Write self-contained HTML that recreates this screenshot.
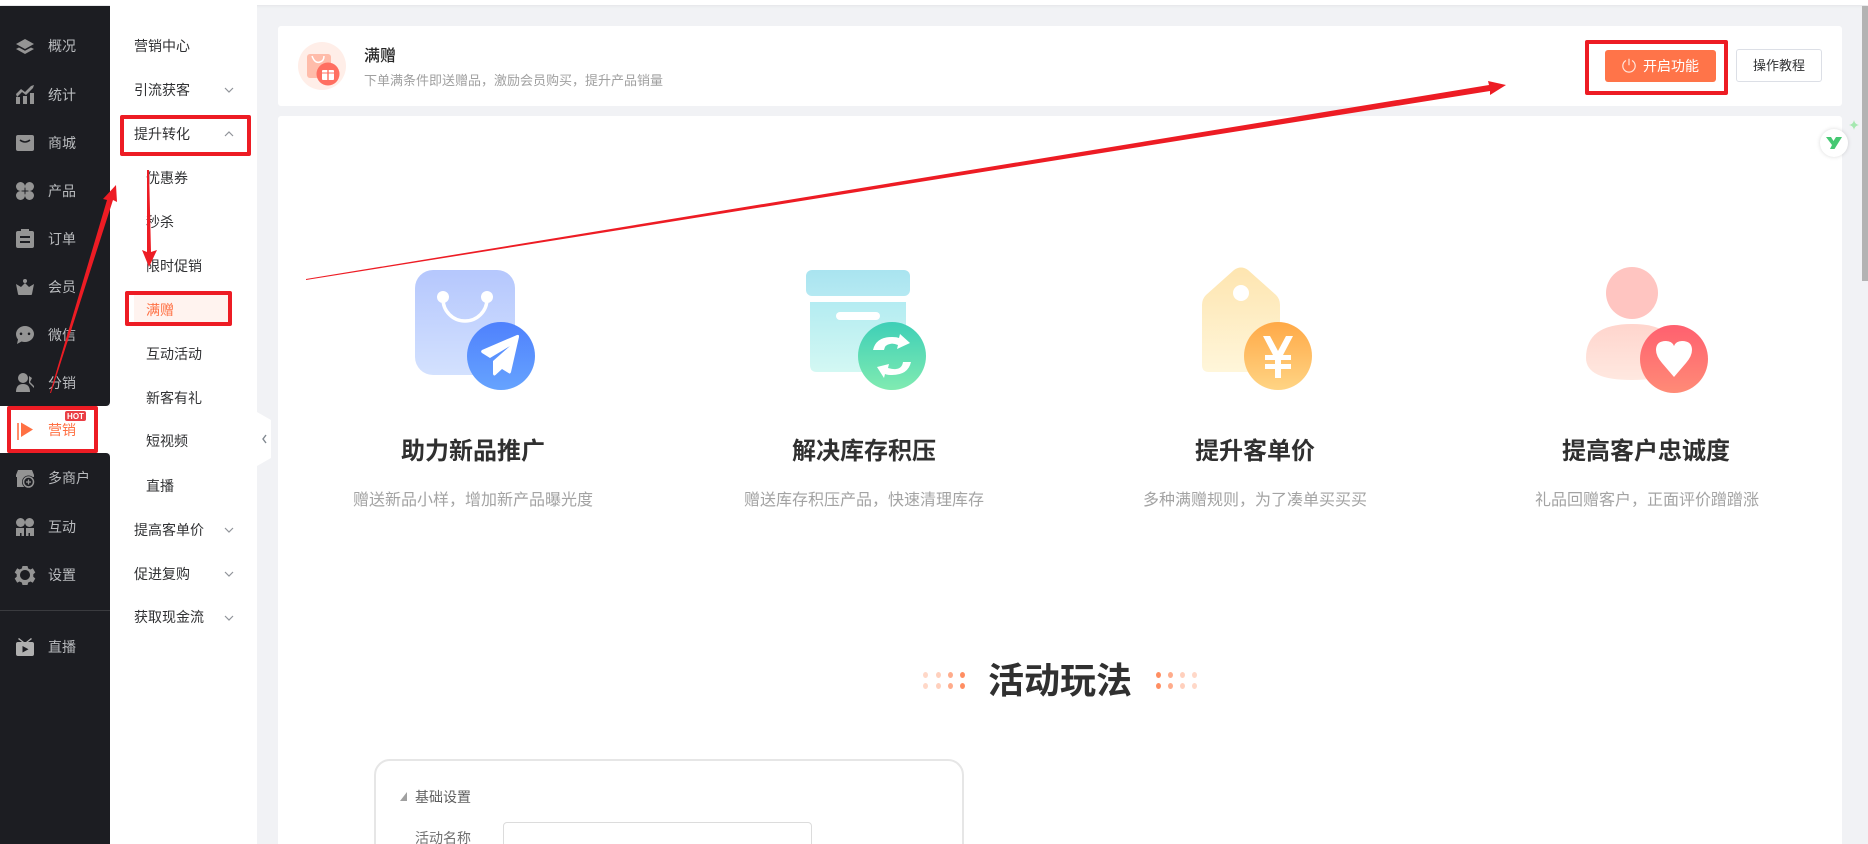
<!DOCTYPE html>
<html lang="zh"><head><meta charset="utf-8"><title>满赠</title>
<style>
*{box-sizing:border-box}
html,body{margin:0;padding:0;width:1868px;height:844px;overflow:hidden;background:#f1f2f5;font-family:"Liberation Sans","Noto Sans CJK SC",sans-serif}
#w{position:absolute;left:0;top:0;width:1868px;height:844px;overflow:hidden;background:#f1f2f5}
.a{position:absolute}
.t{position:absolute;white-space:nowrap;line-height:20px;height:20px}
.s{color:#b9bbbe;font-size:14px;left:48px}
.m{color:#303133;font-size:14px;left:134px}
.u{left:146px}
.chev{position:absolute;left:224px;width:10px;height:6px}
.ti{position:absolute;width:300px;text-align:center;font-size:24px;font-weight:700;color:#303030;line-height:32px}
.su{position:absolute;width:340px;text-align:center;font-size:16px;color:#a3a3a3;line-height:24px}
.d{position:absolute;width:5px;height:6px;border-radius:50%}
.rb{position:absolute;border:4px solid #ed1c24;border-radius:2px}
</style></head><body><div id="w">
<div class="a" style="left:0;top:0;width:1868px;height:5px;background:#fff;box-shadow:0 1px 3px rgba(0,0,0,.06)"></div>
<div class="a" style="left:110px;top:5px;width:147px;height:839px;background:#fff"></div>
<div class="a" style="left:0;top:6px;width:110px;height:400px;background:#1c1d22;border-radius:0 0 4px 0"></div>
<div class="a" style="left:0;top:406px;width:110px;height:47px;background:#fff"></div>
<div class="a" style="left:0;top:453px;width:110px;height:391px;background:#1c1d22;border-radius:0 4px 0 0"></div>
<div class="a" style="left:0;top:610px;width:110px;height:1px;background:#3a3b3f"></div>

<svg class="a" style="left:0;top:0" width="110" height="680" viewBox="0 0 110 680" fill="#949494">
<!-- overview -->
<path d="M25 39l9 5-9 5-9-5z"/><path d="M16 49l3-1.500 6 3.200 6-3.200 3 1.500-9 5z"/>
<!-- stats -->
<path d="M16 94l5-5 4 3 6-6 3-1-1 3-7 7-4-3-5 5z"/><rect x="16" y="97" width="4" height="7"/><rect x="23" y="96" width="4" height="8"/><rect x="30" y="93" width="4" height="11"/>
<!-- shop -->
<path d="M18 135h14q2 0 2 2v12q0 2-2 2H18q-2 0-2-2v-12q0-2 2-2z"/><path d="M20 140q5 4 10 0" fill="none" stroke="#1c1d22" stroke-width="1.500"/>
<!-- product -->
<circle cx="20.500" cy="186.500" r="4.500"/><rect x="20.500" y="186.500" width="4" height="4"/><circle cx="29.500" cy="186.500" r="4.500"/><rect x="25.500" y="186.500" width="4" height="4"/><circle cx="20.500" cy="195.500" r="4.500"/><rect x="20.500" y="191.500" width="4" height="4"/><circle cx="29.500" cy="195.500" r="4.500"/><rect x="25.500" y="191.500" width="4" height="4"/>
<!-- order -->
<path fill-rule="evenodd" d="M21 229h8v2h3q2 0 2 2v13q0 2-2 2H18q-2 0-2-2v-13q0-2 2-2h3zM20 236v2h10v-2zM20 241v2h10v-2z"/>
<!-- member -->
<circle cx="25" cy="281" r="2"/><path d="M16 284l5 3 4-4 4 4 5-3-2 10q0 1-1 1H19q-1 0-1-1z"/>
<!-- wechat -->
<path fill-rule="evenodd" d="M25 326a9 8 0 0 1 0 16q-2 0-3.500-.5L17 344l1-4.500Q16 337 16 334a9 8 0 0 1 9-8zM21 332.500a1.300 1.300 0 1 0 .01 0zM29 332.500a1.300 1.300 0 1 0 .01 0z"/>
<!-- distribution -->
<circle cx="23" cy="378" r="5"/><path d="M16 392q0-8 7-8t7 8z"/><path d="M29 376l3 2-2 4 4 4v2l-5-5z"/>
<!-- multi-merchant -->
<path d="M18 470h14l2 5v2H16v-2z"/><rect x="17" y="477" width="16" height="10"/><circle cx="28.500" cy="482" r="6.500" fill="#1c1d22"/><circle cx="28.500" cy="482" r="5" fill="none" stroke="#949494" stroke-width="1.500"/><path d="M26 482h5M28.500 479.500v5" stroke="#949494" stroke-width="1.300"/>
<!-- interact -->
<circle cx="20.500" cy="522.500" r="4.500"/><circle cx="29.500" cy="522.500" r="4.500"/><path d="M16 528h8v8h-2.500v-3H20v3h-4zM26 528h8v8h-4v-3h-1.500v3H26z"/>
<!-- settings -->
<path fill-rule="evenodd" d="M22.500 566h5l.7 2.500 2.300 1 2.300-1.200 2.500 4.200-2 1.700v2.600l2 1.700-2.500 4.200-2.300-1.200-2.300 1-.7 2.500h-5l-.7-2.500-2.300-1-2.300 1.200-2.500-4.200 2-1.700v-2.600l-2-1.700 2.500-4.200 2.300 1.200 2.300-1zM25 570a5 5 0 1 0 .01 0z"/>
<!-- live -->
<g fill="#b0b0b0"><path fill-rule="evenodd" d="M18 642h14q2 0 2 2v10q0 2-2 2H18q-2 0-2-2v-10q0-2 2-2zM22.500 646v6.500l6-3.200z"/><path d="M18 639l1-1 5 4h-2zM32 639l-1-1-5 4h2z"/></g>
<!-- marketing flag -->
<rect x="17" y="423" width="2" height="17" fill="#ff7043" opacity=".8"/><path d="M21 422.500l12 7-12 7.500z" fill="#ff7043"/>
<rect x="65" y="411" width="21" height="10" rx="2" fill="#ea3f45"/>
<text x="75.500" y="419" fill="#fff" font-size="8" font-weight="700" text-anchor="middle" font-family="Liberation Sans">HOT</text>
</svg>

<div class="t s" style="top:36px">概况</div>
<div class="t s" style="top:85px">统计</div>
<div class="t s" style="top:133px">商城</div>
<div class="t s" style="top:181px">产品</div>
<div class="t s" style="top:229px">订单</div>
<div class="t s" style="top:277px">会员</div>
<div class="t s" style="top:325px">微信</div>
<div class="t s" style="top:373px">分销</div>
<div class="t s" style="top:420px;color:#ff7043">营销</div>
<div class="t s" style="top:468px">多商户</div>
<div class="t s" style="top:517px">互动</div>
<div class="t s" style="top:565px">设置</div>
<div class="t s" style="top:637px">直播</div>

<div class="a" style="left:134px;top:293px;width:94px;height:30px;background:#fff3ef"></div>
<div class="t m" style="top:36px">营销中心</div>
<div class="t m" style="top:80px">引流获客</div>
<div class="t m" style="top:124px">提升转化</div>
<div class="t m u" style="top:168px">优惠券</div>
<div class="t m u" style="top:212px">秒杀</div>
<div class="t m u" style="top:256px">限时促销</div>
<div class="t m u" style="top:300px;color:#ff7043">满赠</div>
<div class="t m u" style="top:344px">互动活动</div>
<div class="t m u" style="top:388px">新客有礼</div>
<div class="t m u" style="top:431px">短视频</div>
<div class="t m u" style="top:476px">直播</div>
<div class="t m" style="top:520px">提高客单价</div>
<div class="t m" style="top:564px">促进复购</div>
<div class="t m" style="top:607px">获取现金流</div>
<svg class="chev" style="top:87px" viewBox="0 0 10 6"><path d="M1 1l4 4 4-4" fill="none" stroke="#909399" stroke-width="1.200"/></svg>
<svg class="chev" style="top:131px" viewBox="0 0 10 6"><path d="M1 5l4-4 4 4" fill="none" stroke="#909399" stroke-width="1.200"/></svg>
<svg class="chev" style="top:527px" viewBox="0 0 10 6"><path d="M1 1l4 4 4-4" fill="none" stroke="#909399" stroke-width="1.200"/></svg>
<svg class="chev" style="top:571px" viewBox="0 0 10 6"><path d="M1 1l4 4 4-4" fill="none" stroke="#909399" stroke-width="1.200"/></svg>
<svg class="chev" style="top:615px" viewBox="0 0 10 6"><path d="M1 1l4 4 4-4" fill="none" stroke="#909399" stroke-width="1.200"/></svg>

<!-- collapse handle -->
<svg class="a" style="left:257px;top:411px" width="15" height="56" viewBox="0 0 15 56"><path d="M0 1l14 8v38L0 55z" fill="#fff"/><path d="M9 24l-3 4 3 4" fill="none" stroke="#808890" stroke-width="1.400"/></svg>

<!-- header card -->
<div class="a" style="left:278px;top:26px;width:1564px;height:80px;background:#fff;border-radius:3px"></div>
<svg class="a" style="left:298px;top:42px" width="48" height="48" viewBox="0 0 48 48">
<circle cx="24" cy="24" r="24" fill="#ffeee8"/>
<rect x="9" y="12" width="24" height="24" rx="3" fill="#ffbcaa"/><path d="M14 14q3 8 8 6 4-1 4-6" fill="none" stroke="#fff" stroke-width="1.500"/>
<circle cx="30" cy="32" r="11.500" fill="#ff6f61"/><rect x="24" y="28" width="12" height="10" rx="1" fill="#fff"/><rect x="29.300" y="27" width="1.400" height="12" fill="#ff6f61"/><path d="M24 31h12" stroke="#ff6f61" stroke-width="1"/>
</svg>
<div class="t" style="left:364px;top:47px;font-size:16px;font-weight:500;color:#262626">满赠</div>
<div class="t" style="left:364px;top:71px;font-size:13px;color:#a0a0a0">下单满条件即送赠品，激励会员购买，提升产品销量</div>
<div class="a" style="left:1605px;top:50px;width:111px;height:32px;background:#ff7449;border-radius:3px"></div>
<svg class="a" style="left:1621px;top:58px" width="16" height="16" viewBox="0 0 16 16"><path d="M5 2.500a6.200 6.200 0 1 0 6 0M8 .8v6.500" fill="none" stroke="#ffe6dc" stroke-width="1.200"/></svg>
<div class="t" style="left:1643px;top:56px;font-size:14px;color:#fff">开启功能</div>
<div class="a" style="left:1736px;top:49px;width:86px;height:33px;background:#fff;border:1px solid #dcdfe6;border-radius:3px;text-align:center;font-size:13px;line-height:31px;color:#303133">操作教程</div>

<!-- content card -->
<div class="a" style="left:278px;top:116px;width:1564px;height:728px;background:#fff;border-radius:3px 3px 0 0"></div>
<div class="a" style="left:1862px;top:6px;width:6px;height:275px;background:#b3b3b3"></div>

<!-- floating y icon -->
<div class="a" style="left:1820px;top:129px;width:28px;height:28px;background:#fff;border-radius:50%;box-shadow:0 0 4px rgba(0,0,0,.15)"></div>
<svg class="a" style="left:1826px;top:136px" width="16" height="14" viewBox="0 0 16 14"><path d="M0 1h5l2.500 4L10 1h6L8.500 13H4l2-4z" fill="#45c872"/></svg>
<svg class="a" style="left:1849px;top:120px" width="10" height="10" viewBox="0 0 10 10"><path d="M5 0q.7 4.300 5 5-4.300.7-5 5-.7-4.300-5-5 4.300-.7 5-5z" fill="#a5e8b0"/></svg>

<!-- feature icons -->
<svg class="a" style="left:340px;top:250px" width="1500" height="150" viewBox="340 250 1500 150">
<defs>
<linearGradient id="g1" x1="0" y1="0" x2="0" y2="1"><stop offset="0" stop-color="#b5c7fd"/><stop offset="1" stop-color="#d3e1fe"/></linearGradient>
<linearGradient id="g2" x1="0" y1="0" x2="0" y2="1"><stop offset="0" stop-color="#4f81fd"/><stop offset="1" stop-color="#66a3fe"/></linearGradient>
<linearGradient id="g3" x1="0" y1="0" x2="0" y2="1"><stop offset="0" stop-color="#a9e4f0"/><stop offset="1" stop-color="#b5e9f2"/></linearGradient>
<linearGradient id="g4" x1="0" y1="0" x2="0" y2="1"><stop offset="0" stop-color="#b4ecf2"/><stop offset="1" stop-color="#d3f8f3"/></linearGradient>
<linearGradient id="g5" x1="0" y1="0" x2="0" y2="1"><stop offset="0" stop-color="#3ecfb7"/><stop offset="1" stop-color="#80ebb1"/></linearGradient>
<linearGradient id="g6" x1="0" y1="0" x2="0" y2="1"><stop offset="0" stop-color="#fee5b0"/><stop offset="1" stop-color="#fff6da"/></linearGradient>
<linearGradient id="g7" x1="0" y1="0" x2="0" y2="1"><stop offset="0" stop-color="#ffa947"/><stop offset="1" stop-color="#ffd484"/></linearGradient>
<linearGradient id="g8" x1="0" y1="0" x2="0" y2="1"><stop offset="0" stop-color="#ffd5cd"/><stop offset="1" stop-color="#ffe8e0"/></linearGradient>
<linearGradient id="g9" x1="0" y1="0" x2="0" y2="1"><stop offset="0" stop-color="#ff606f"/><stop offset="1" stop-color="#ff8b77"/></linearGradient>
</defs>
<!-- bag -->
<rect x="415" y="270" width="100" height="105" rx="18" fill="url(#g1)"/>
<path d="M443 299a22 22 0 0 0 44 0" fill="none" stroke="#fff" stroke-width="3.500"/><circle cx="443" cy="297" r="6" fill="#fff"/><circle cx="487" cy="297" r="6" fill="#fff"/>
<circle cx="501" cy="356" r="34" fill="url(#g2)"/>
<path d="M519 337l-8 35q-.6 2.500-2.500 1L502 369l-6.500 6q-2 1.500-2.500-1v-13l17-15-20 12-8-5q-1.800-1.600 0-3l35-15q2-.6 2 1z" fill="#fff"/>
<!-- box -->
<rect x="806" y="270" width="104" height="26" rx="6" fill="url(#g3)"/>
<path d="M810 302h96v70H817q-7 0-7-7z" fill="url(#g4)"/>
<rect x="836" y="312" width="44" height="8" rx="4" fill="#fff"/>
<circle cx="892" cy="356" r="34" fill="url(#g5)"/>
<path d="M873 350q3-13 19-13 5 0 7 1l1-4 10 9-13 6 1-4q-5-2-8-1-5 .5-6 6zM911 362q-3 13-19 13-5 0-7-1l-1 4-7-11 12-3-1 4q5 1.500 8 1 6-.5 7-7z" fill="#fff"/>
<!-- tag -->
<path d="M1202 305q0-6 4-10l28-25q7-5 14 0l28 25q4 4 4 10v60q0 7-7 7h-64q-7 0-7-7z" fill="url(#g6)"/>
<ellipse cx="1241" cy="293" rx="8" ry="8" fill="#fff"/>
<circle cx="1278" cy="356" r="34" fill="url(#g7)"/>
<path d="M1263 336h7l8 15 8-15h7l-10 19h8v5h-10v4h10v5h-10v9h-6v-9h-10v-5h10v-4h-10v-5h8z" fill="#fff"/>
<!-- person -->
<circle cx="1632" cy="293" r="26" fill="#ffc5c1"/>
<path d="M1586 358q0-34 46-34 46 0 46 34 0 22-46 22-46 0-46-22z" fill="url(#g8)"/>
<circle cx="1674" cy="359" r="34" fill="url(#g9)"/>
<path d="M1674 377l-12-14q-6-7-6-13 0-9 10-9 6 0 8 5 2-5 8-5 10 0 10 9 0 6-6 13z" fill="#fff"/>
</svg>

<div class="ti" style="left:323px;top:436px">助力新品推广</div>
<div class="ti" style="left:714px;top:436px">解决库存积压</div>
<div class="ti" style="left:1105px;top:436px">提升客单价</div>
<div class="ti" style="left:1496px;top:436px">提高客户忠诚度</div>
<div class="su" style="left:303px;top:489px">赠送新品小样，增加新产品曝光度</div>
<div class="su" style="left:694px;top:489px">赠送库存积压产品，快速清理库存</div>
<div class="su" style="left:1085px;top:489px">多种满赠规则，为了凑单买买买</div>
<div class="su" style="left:1477px;top:489px">礼品回赠客户，正面评价蹭蹭涨</div>

<!-- section heading -->
<div class="t" style="left:988px;top:656px;height:50px;line-height:50px;font-size:36px;font-weight:700;color:#303030">活动玩法</div>
<div class="d" style="left:923px;top:672px;background:#ffd8c8"></div><div class="d" style="left:936px;top:672px;background:#ffd0bd"></div><div class="d" style="left:948px;top:672px;background:#ffac8c"></div><div class="d" style="left:960px;top:672px;background:#ff8e62"></div>
<div class="d" style="left:923px;top:683px;background:#ffd8c8"></div><div class="d" style="left:936px;top:683px;background:#ffd0bd"></div><div class="d" style="left:948px;top:683px;background:#ffac8c"></div><div class="d" style="left:960px;top:683px;background:#ff8e62"></div>
<div class="d" style="left:1156px;top:672px;background:#ff8e62"></div><div class="d" style="left:1168px;top:672px;background:#ffac8c"></div><div class="d" style="left:1180px;top:672px;background:#ffd0bd"></div><div class="d" style="left:1192px;top:672px;background:#ffd8c8"></div>
<div class="d" style="left:1156px;top:683px;background:#ff8e62"></div><div class="d" style="left:1168px;top:683px;background:#ffac8c"></div><div class="d" style="left:1180px;top:683px;background:#ffd0bd"></div><div class="d" style="left:1192px;top:683px;background:#ffd8c8"></div>

<!-- form preview -->
<div class="a" style="left:374px;top:759px;width:590px;height:120px;border:2px solid #e6e6e6;border-radius:16px;background:#fff"></div>
<svg class="a" style="left:400px;top:792px" width="8" height="9" viewBox="0 0 8 9"><path d="M7 0v9H0z" fill="#a0a0a0"/></svg>
<div class="t" style="left:415px;top:787px;font-size:14px;color:#606060">基础设置</div>
<div class="t" style="left:415px;top:828px;font-size:14px;color:#707070">活动名称</div>
<div class="a" style="left:503px;top:822px;width:309px;height:40px;border:1px solid #dcdcdc;border-radius:4px;background:#fff"></div>

<!-- red annotation -->
<div class="rb" style="left:120px;top:115px;width:131px;height:41px"></div>
<div class="rb" style="left:125px;top:291px;width:107px;height:35px"></div>
<div class="rb" style="left:7px;top:406px;width:91px;height:47px"></div>
<div class="rb" style="left:1585px;top:40px;width:143px;height:55px"></div>
<svg class="a" style="left:0;top:0" width="1868" height="844" viewBox="0 0 1868 844" fill="#ed1c24">
<path d="M50 393l57-193-4-1 13-14 1 17-4-2-62 193z"/>
<path d="M147 170h2l2 82 6-2-8 17-7-17 5 2z"/>
<path d="M306 279L1489 85l-1-4 18 4-16 10v-4L306 280z"/>
</svg>
</div></body></html>
